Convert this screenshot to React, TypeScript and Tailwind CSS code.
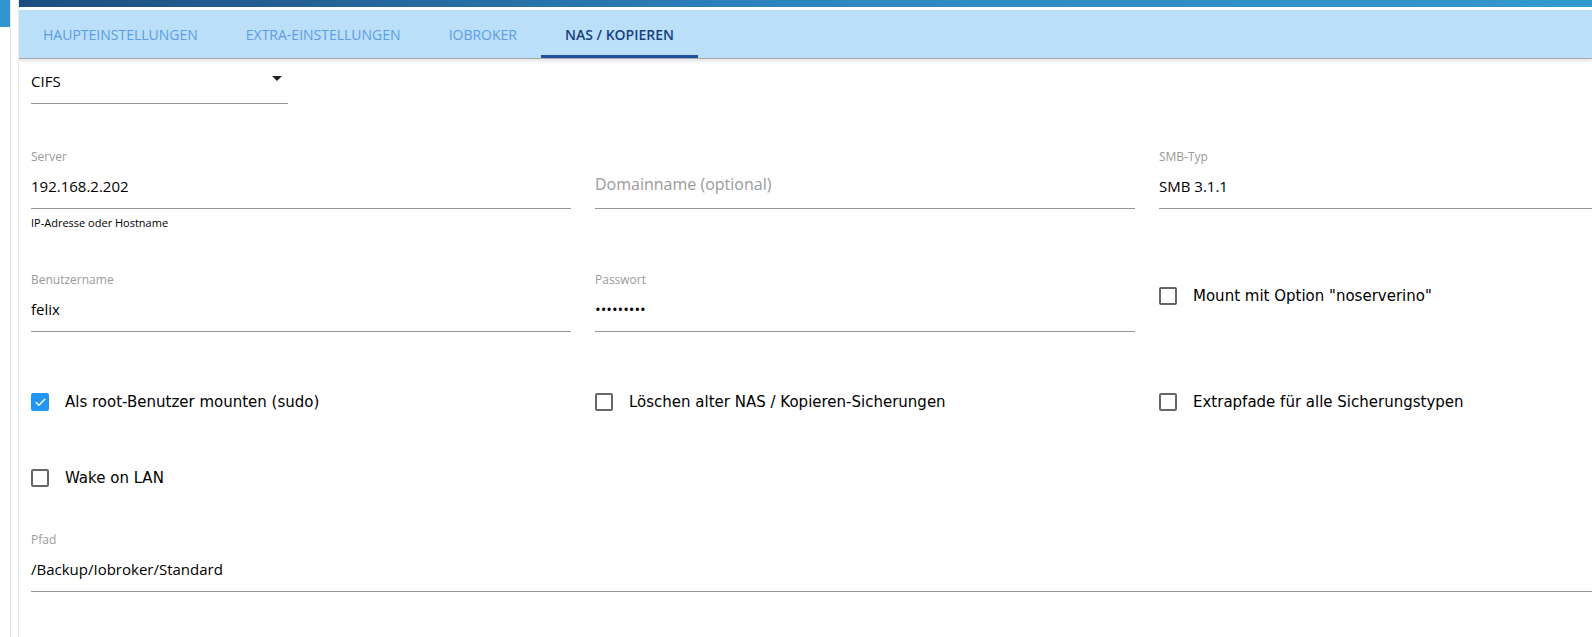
import { Check } from 'lucide-react';

const tabs = ['Haupteinstellungen', 'Extra-Einstellungen', 'Iobroker', 'NAS / Kopieren'];

interface FieldProps {
  label?: string;
  value?: string;
  placeholder?: string;
  helper?: string;
}

const Field: React.FC<FieldProps> = ({ label, value, placeholder, helper }) => (
  <div className="flex flex-col">
    <div className="h-[20px] text-[12px] leading-[24px] text-[#9a9a9a]">{label}</div>
    <div className="flex h-[44px] items-center border-b border-[#949494]">
      {value ? (
        <span className="text-[15px] text-black">{value}</span>
      ) : (
        <span className="-mt-[6px] text-[16px] text-[#9a9a9a]">{placeholder}</span>
      )}
    </div>
    {helper && <div className="mt-[6px] h-[16px] text-[11px] leading-[16px] text-black">{helper}</div>}
  </div>
);

const CheckRow: React.FC<{ label: string; checked?: boolean }> = ({ label, checked }) => (
  <div className="flex h-[24px] items-center gap-[16px] font-['DejaVu_Sans',sans-serif] text-[15px] text-black">
    {checked ? (
      <span className="flex h-[18px] w-[18px] items-center justify-center rounded-[2px] bg-[#2196f3]">
        <Check size={13} strokeWidth={2.5} color="white" />
      </span>
    ) : (
      <span className="h-[18px] w-[18px] rounded-[2px] border-2 border-[#666]" />
    )}
    <span>{label}</span>
  </div>
);

export default function App() {
  return (
    <div className="flex h-[637px] w-[1592px] overflow-hidden bg-white font-['Open_Sans',sans-serif]">
      {/* left strip */}
      <div className="flex w-[10px] shrink-0 flex-col">
        <div className="h-[27px] bg-[#3096cc]" />
      </div>
      <div className="w-[1px] shrink-0 bg-[#e2e2e2]" />
      <div className="w-[7px] shrink-0" />
      <div className="w-[1px] shrink-0 bg-[#e6e6e6]" />

      <div className="flex min-w-0 flex-1 flex-col overflow-hidden">
        <div className="h-[7px] bg-gradient-to-r from-[#1d4d80] via-[#2d87bf] to-[#3399cc]" />
        <div className="h-[3px]" />
        <div className="flex h-[48px] shrink-0 bg-[#bbdff9] shadow-[0_1px_0_#a9a9a9,0_3px_4px_rgba(0,0,0,0.12)]">
          {tabs.map((t, i) => {
            const active = i === tabs.length - 1;
            return (
              <div
                key={t}
                className={
                  active
                    ? 'flex items-center border-b-[3px] border-[#1c4fa0] px-[24px] pt-[3px] text-[14px] font-semibold uppercase text-[#173f7f]'
                    : 'flex items-center px-[24px] text-[14px] uppercase text-[#5a9ce6]'
                }
              >
                {t}
              </div>
            );
          })}
        </div>

        <div className="flex flex-col pl-[12px]">
          {/* type select */}
          <div className="mt-[2px] flex h-[44px] w-[257px] items-center justify-between border-b border-[#949494]">
            <span className="text-[15px] text-black">CIFS</span>
            <svg width="10" height="5" viewBox="0 0 10 5" className="mr-[6px] -mt-[6px]">
              <path d="M0 0h10L5 5z" fill="#222" />
            </svg>
          </div>

          <div className="mt-[41px] grid grid-cols-[540px_540px_1fr] gap-x-[24px]">
            <Field label="Server" value="192.168.2.202" helper="IP-Adresse oder Hostname" />
            <Field placeholder="Domainname (optional)" />
            <Field label="SMB-Typ" value="SMB 3.1.1" />
          </div>

          <div className="mt-[37px] grid grid-cols-[540px_540px_1fr] gap-x-[24px]">
            <Field label="Benutzername" value="felix" />
            <Field label="Passwort" value="•••••••••" />
            <div className="pt-[16px]">
              <CheckRow label={'Mount mit Option "noserverino"'} />
            </div>
          </div>

          <div className="mt-[58px] grid grid-cols-[540px_540px_1fr] gap-x-[24px]">
            <CheckRow label="Als root-Benutzer mounten (sudo)" checked />
            <CheckRow label="Löschen alter NAS / Kopieren-Sicherungen" />
            <CheckRow label="Extrapfade für alle Sicherungstypen" />
          </div>

          <div className="mt-[52px]">
            <CheckRow label="Wake on LAN" />
          </div>

          <div className="mt-[38px]">
            <Field label="Pfad" value="/Backup/Iobroker/Standard" />
          </div>
        </div>
      </div>
    </div>
  );
}
